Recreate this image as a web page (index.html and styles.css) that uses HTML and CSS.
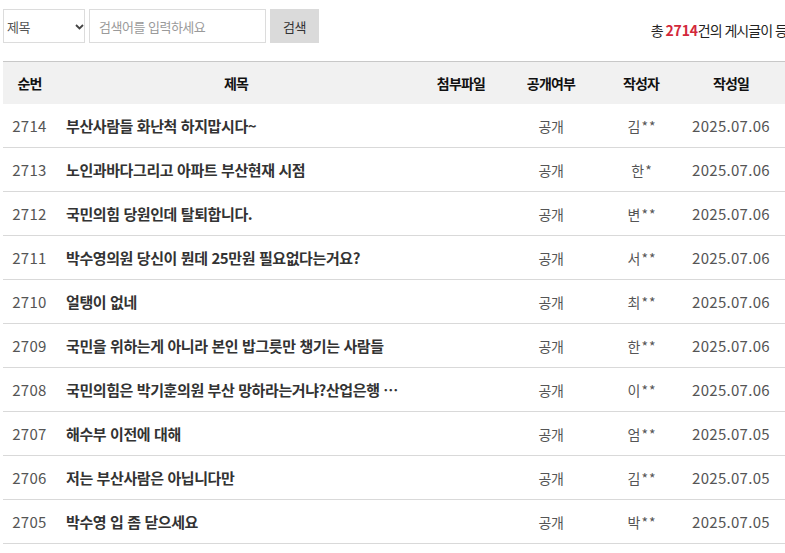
FILE: index.html
```html
<!DOCTYPE html>
<html lang="ko">
<head>
<meta charset="utf-8">
<title>게시판</title>
<link rel="stylesheet" href="styles.css">
</head>
<body>
<div class="board">
  <div class="toolbar">
    <form class="search">
      <div class="select-wrap">
        <select class="select"><option>제목</option><option>내용</option></select>
        <svg class="chev" width="9" height="6" viewBox="0 0 9 6"><path d="M1 1 L4.5 4.5 L8 1" fill="none" stroke="#444" stroke-width="1.8"/></svg>
      </div>
      <input class="input" type="text" placeholder="검색어를 입력하세요">
      <button class="btn" type="button">검색</button>
    </form>
    <p class="total">총 <b>2714</b>건의 게시글이 등록되었습니다.</p>
  </div>
  <table class="list">
    <colgroup>
      <col class="c-no"><col class="c-title"><col class="c-file"><col class="c-open"><col class="c-writer"><col class="c-date"><col>
    </colgroup>
    <thead>
      <tr><th>순번</th><th>제목</th><th>첨부파일</th><th>공개여부</th><th>작성자</th><th>작성일</th><th></th></tr>
    </thead>
    <tbody>
      <tr><td class="num">2714</td><td class="title">부산사람들 화난척 하지맙시다~</td><td></td><td>공개</td><td class="writer">김**</td><td class="num">2025.07.06</td><td></td></tr>
      <tr><td class="num">2713</td><td class="title">노인과바다그리고 아파트 부산현재 시점</td><td></td><td>공개</td><td class="writer">한*</td><td class="num">2025.07.06</td><td></td></tr>
      <tr><td class="num">2712</td><td class="title">국민의힘 당원인데 탈퇴합니다.</td><td></td><td>공개</td><td class="writer">변**</td><td class="num">2025.07.06</td><td></td></tr>
      <tr><td class="num">2711</td><td class="title">박수영의원 당신이 뭔데 25만원 필요없다는거요?</td><td></td><td>공개</td><td class="writer">서**</td><td class="num">2025.07.06</td><td></td></tr>
      <tr><td class="num">2710</td><td class="title">얼탱이 없네</td><td></td><td>공개</td><td class="writer">최**</td><td class="num">2025.07.06</td><td></td></tr>
      <tr><td class="num">2709</td><td class="title">국민을 위하는게 아니라 본인 밥그릇만 챙기는 사람들</td><td></td><td>공개</td><td class="writer">한**</td><td class="num">2025.07.06</td><td></td></tr>
      <tr><td class="num">2708</td><td class="title">국민의힘은 박기훈의원 부산 망하라는거냐?산업은행 …</td><td></td><td>공개</td><td class="writer">이**</td><td class="num">2025.07.06</td><td></td></tr>
      <tr><td class="num">2707</td><td class="title">해수부 이전에 대해</td><td></td><td>공개</td><td class="writer">엄**</td><td class="num">2025.07.05</td><td></td></tr>
      <tr><td class="num">2706</td><td class="title">저는 부산사람은 아닙니다만</td><td></td><td>공개</td><td class="writer">김**</td><td class="num">2025.07.05</td><td></td></tr>
      <tr><td class="num">2705</td><td class="title">박수영 입 좀 닫으세요</td><td></td><td>공개</td><td class="writer">박**</td><td class="num">2025.07.05</td><td></td></tr>
    </tbody>
  </table>
</div>
</body>
</html>
```
FILE: styles.css
```css
html, body {
  margin: 0;
  padding: 0;
  background: #fff;
}
body {
  font-family: "Noto Sans CJK KR", "Noto Sans", sans-serif;
  color: #333;
  overflow: hidden;
}
.board {
  width: 858px;
  padding: 9px 0 0 3px;
}
.toolbar {
  display: flex;
  justify-content: space-between;
  align-items: flex-start;
  height: 52px;
}
.search {
  display: flex;
  gap: 4px;
  margin: 0;
}
.select-wrap {
  position: relative;
}
.select {
  appearance: none;
  -webkit-appearance: none;
  width: 82px;
  height: 34px;
  border: 1px solid #dcdcdc;
  background: #fff;
  padding: 0 0 0 3px;
  font-family: inherit;
  font-size: 13px;
  color: #555;
  letter-spacing: -0.5px;
  border-radius: 0;
  outline: none;
}
.chev {
  position: absolute;
  left: 72px;
  top: 15px;
}
.input {
  width: 177px;
  height: 34px;
  box-sizing: border-box;
  border: 1px solid #dcdcdc;
  padding: 0 9px;
  font-family: inherit;
  font-size: 13px;
  letter-spacing: -0.5px;
  outline: none;
}
.input::placeholder {
  color: #9a9a9a;
}
.btn {
  width: 49px;
  height: 34px;
  border: 0;
  background: #dadada;
  color: #333;
  font-family: inherit;
  font-size: 13px;
  letter-spacing: -0.5px;
  padding: 0;
}
.total {
  margin: 11px 0 0;
  font-size: 14px;
  color: #222;
  letter-spacing: -1px;
  white-space: nowrap;
}
.total b {
  color: #d3283b;
  font-weight: bold;
  letter-spacing: -0.2px;
}
.list {
  width: 100%;
  border-collapse: collapse;
  table-layout: fixed;
  border-top: 1px solid #c8c8c8;
}
.c-no { width: 53px; }
.c-title { width: 360px; }
.c-file, .c-open, .c-writer, .c-date { width: 90px; }
.list th {
  background: #f1f1f1;
  height: 42px;
  padding: 0;
  font-size: 14px;
  font-weight: bold;
  color: #111;
  letter-spacing: -0.8px;
  text-align: center;
}
.list td {
  height: 43px;
  padding: 0;
  border-bottom: 1px solid #d9d9d9;
  text-align: center;
  font-size: 14px;
  color: #555;
  letter-spacing: -0.5px;
  white-space: nowrap;
}
.list td.num {
  font-size: 15px;
  letter-spacing: 0.3px;
  color: #555;
}
.list td.writer {
  letter-spacing: 1px;
  padding-left: 2px;
}
.list td.title {
  text-align: left;
  padding-left: 10px;
  font-size: 15px;
  font-weight: bold;
  color: #333;
  letter-spacing: -0.4px;
  overflow: hidden;
}
```
